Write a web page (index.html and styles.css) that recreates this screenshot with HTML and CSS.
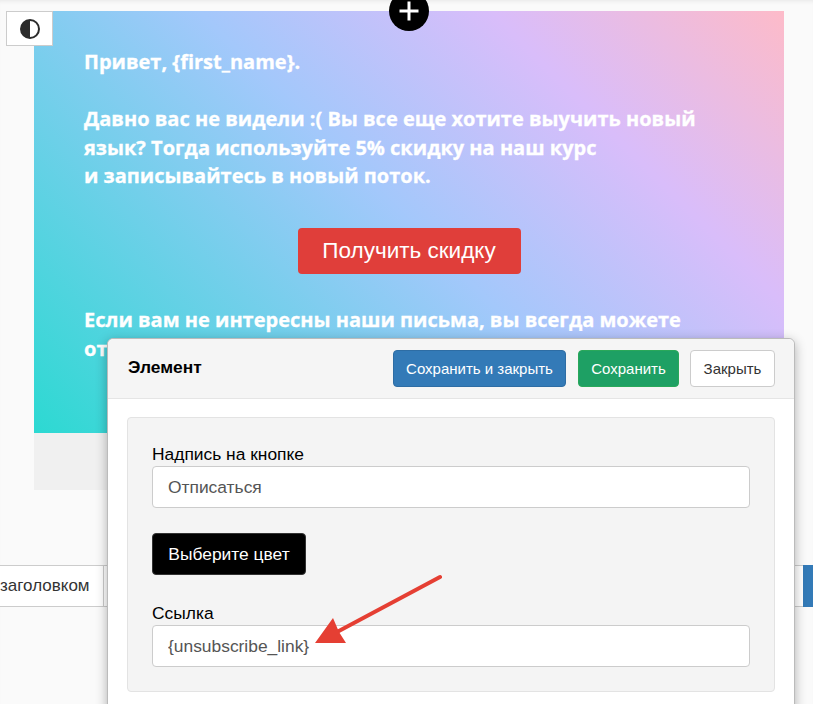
FILE: index.html
```html
<!DOCTYPE html>
<html>
	<head>
		<meta charset="utf-8">
		<title>Элемент</title>
		<link rel="stylesheet" href="styles.css">
	</head>
	<body>
		<div class="stage">
			<div class="letter">
				<div class="letter_body">
					<p class="letter_text">Привет, {first_name}.</p>
					<p class="letter_text">Давно вас не видели :( Вы все еще хотите выучить новый<br>язык? Тогда используйте 5% скидку на наш курс<br>и записывайтесь в новый поток.</p>
					<div class="cta_row"><a class="cta">Получить скидку</a></div>
					<p class="letter_text">Если вам не интересны наши письма, вы всегда можете<br>отписаться от рассылки</p>
				</div>
				<div class="letter_footer"></div>
			</div>

			<div class="toolbar">
				<div class="toolbar_item">заголовком</div>
				<div class="toolbar_rest"></div>
				<div class="toolbar_blue"></div>
			</div>
		</div>

		<div class="contrast_btn">
			<svg width="22" height="22" viewBox="0 0 22 22"><circle cx="11" cy="11" r="9" fill="#fff" stroke="#2b2b2b" stroke-width="2"/><path d="M11 2a9 9 0 0 0 0 18z" fill="#2b2b2b"/></svg>
		</div>
		<div class="add_btn">
			<svg width="20" height="20" viewBox="0 0 20 20"><path d="M10 .5v19M.5 10h19" stroke="#fff" stroke-width="3"/></svg>
		</div>

		<div class="modal">
			<div class="modal_head">
				<div class="modal_title">Элемент</div>
				<div class="modal_btns">
					<button class="btn btn_blue">Сохранить и закрыть</button>
					<button class="btn btn_green">Сохранить</button>
					<button class="btn btn_white">Закрыть</button>
				</div>
			</div>
			<div class="modal_body">
				<div class="well">
					<label class="field_label">Надпись на кнопке</label>
					<input class="field" type="text" value="Отписаться">
					<button class="btn_color">Выберите цвет</button>
					<label class="field_label">Ссылка</label>
					<input class="field" type="text" value="{unsubscribe_link}">
				</div>
			</div>
		</div>

		<svg class="arrow" width="130" height="82" viewBox="0 0 130 82">
			<path d="M128 3L25 58" stroke="#e53f33" stroke-width="4" stroke-linecap="round"/>
			<path d="M3 69L21 44L27 58L34 69z" fill="#e53f33"/>
		</svg>
	</body>
</html>
```

FILE: styles.css
```css
html,body,p {margin: 0px;padding: 0px;}
body {width: 813px;height: 704px;overflow: hidden;position: relative;background: #fafafa;font-family: "Liberation Sans", Arial, sans-serif;}

.stage {padding: 11px 0 0 34px;box-shadow: inset 0 4px 4px -3px #e6e6e6;height: 693px;}

/* письмо */
.letter {width: 750px;}
.letter_body {height: 422px;box-sizing: border-box;padding: 37px 50px 0 50px;background: linear-gradient(45deg, #2cd9d2 0%, #a3c8fb 50%, #d9bdfa 75%, #fdbbc9 100%);}
.letter_text {font-family: "Open Sans", sans-serif;font-weight: 700;font-size: 20px;line-height: 28.5px;color: #fff;margin-bottom: 28.5px;-webkit-text-stroke: .3px #fff;}
.cta_row {display: flex;justify-content: center;margin: 37.5px 0 32px;}
.cta {display: block;width: 223px;height: 46px;line-height: 46px;text-align: center;background: #e03e3a;color: #fff;font-size: 22.5px;border-radius: 4px;}
.letter_footer {height: 57px;background: #f0f0f0;}

.toolbar {display: flex;height: 42px;margin: 75px 0 0 -34px;background: #fff;border-top: 1px solid #ccc;border-bottom: 1px solid #ccc;box-sizing: border-box;}
.toolbar_item {width: 104px;border-right: 1px solid #ccc;box-sizing: border-box;font-size: 17px;line-height: 40px;color: #333;text-align: right;padding-right: 15px;white-space: nowrap;}
.toolbar_rest {flex: 1;}
.toolbar_blue {width: 10px;background: #337ab7;margin: -1px 0;}

.contrast_btn {position: absolute;left: 6px;top: 11px;width: 47px;height: 35px;box-sizing: border-box;border: 1px solid #ccc;background: #fff;display: flex;align-items: center;justify-content: center;}
.add_btn {position: absolute;left: 389px;top: -9px;width: 40px;height: 40px;border-radius: 50%;background: #000;display: flex;align-items: center;justify-content: center;}

/* окно */
.modal {position: absolute;left: 107px;top: 338px;width: 688px;height: 400px;box-sizing: border-box;background: #fff;border: 1px solid #bbb;border-radius: 6px;box-shadow: 0 3px 12px rgba(0,0,0,.3);}
.modal_head {height: 60px;box-sizing: border-box;padding: 11px 19px 0 20px;background: #f5f5f5;border-bottom: 1px solid #e5e5e5;border-radius: 6px 6px 0 0;display: flex;justify-content: space-between;}
.modal_title {font-size: 17.4px;font-weight: 700;color: #000;line-height: 34px;}
.modal_btns {display: flex;gap: 12px;}
.btn {height: 37px;box-sizing: border-box;font-family: "Liberation Sans", Arial, sans-serif;font-size: 15px;border-radius: 4px;border: 1px solid transparent;padding: 0;}
.btn_blue {width: 173px;background: #337ab7;border-color: #2e6da4;color: #fff;}
.btn_green {width: 101px;background: #1ea064;border-color: #2aa85a;color: #fff;}
.btn_white {width: 85px;background: #fff;border-color: #ccc;color: #333;margin-left: -1px;}

.modal_body {padding: 18px 19px;}
.well {box-sizing: border-box;height: 275px;padding: 26px 24px 0 24px;background: #f4f4f4;border: 1px solid #e3e3e3;border-radius: 4px;}
.field_label {display: block;font-size: 17.4px;line-height: 20px;color: #000;margin-bottom: 2px;}
.field {display: block;box-sizing: border-box;width: 598px;height: 42px;padding: 0 15px;font-family: "Liberation Sans", Arial, sans-serif;font-size: 17.4px;color: #555;background: #fff;border: 1px solid #ccc;border-radius: 4px;}
.btn_color {display: block;box-sizing: border-box;width: 154px;height: 42px;margin: 25px 0 28px;padding: 0;background: #000;color: #fff;font-family: "Liberation Sans", Arial, sans-serif;font-size: 17.4px;border: 1px solid #333;border-radius: 4px;}

.arrow {position: absolute;left: 312px;top: 574px;}
```
